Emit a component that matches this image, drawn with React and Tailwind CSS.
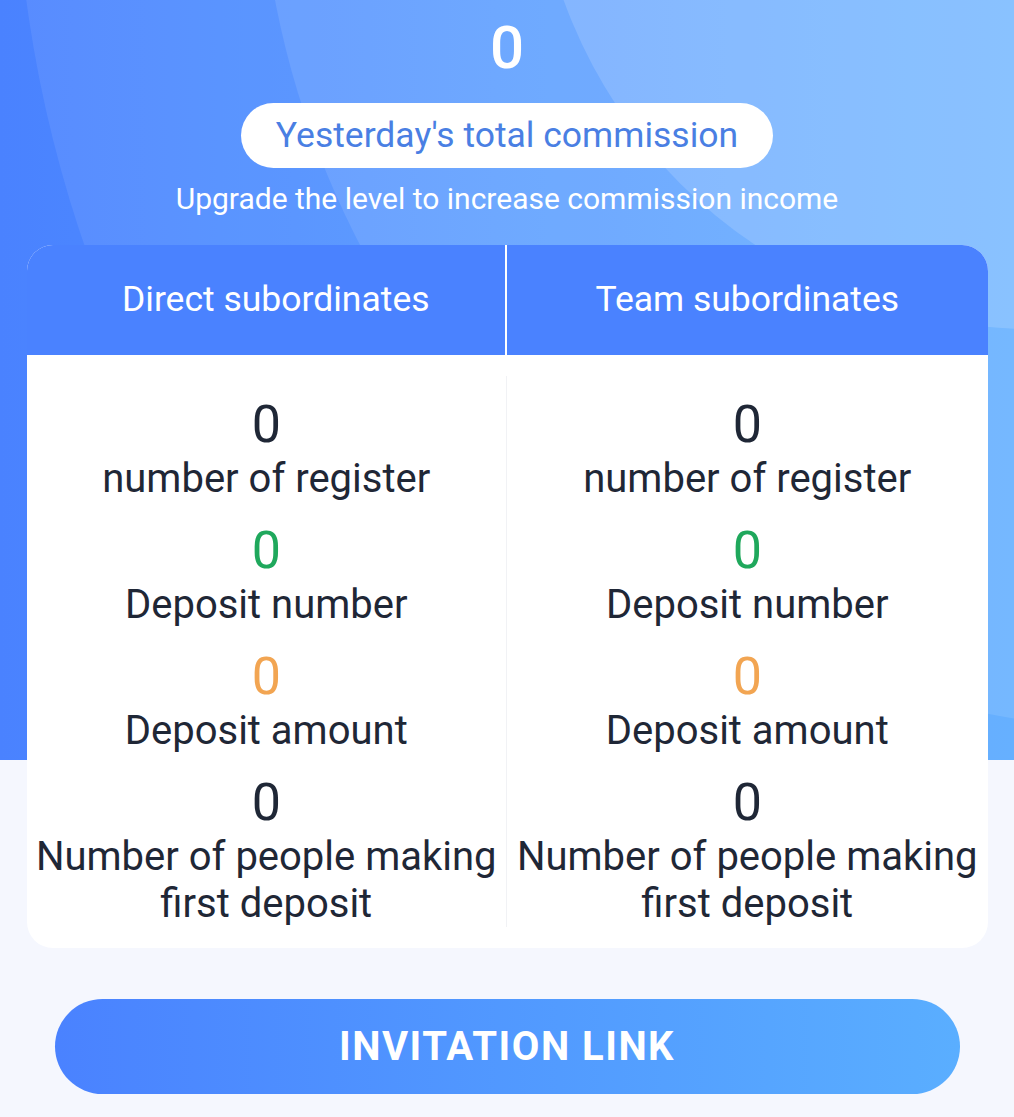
import React from 'react';

const stats = [
  { label: 'number of register', color: 'text-[#1f2736]' },
  { label: 'Deposit number', color: 'text-[#1fa85c]' },
  { label: 'Deposit amount', color: 'text-[#f2a552]' },
  { label: 'Number of people making first deposit', color: 'text-[#1f2736]' },
];

const StatColumn = ({ bordered }) => (
  <div className={`flex flex-col items-center ${bordered ? 'border-r border-[#f1f2f5]' : ''}`}>
    {stats.map((s) => (
      <div key={s.label} className="mt-[18px] flex flex-col items-center text-center">
        <div className={`text-[52px] leading-[61px] ${s.color}`}>0</div>
        <div className="text-[40px] leading-[47px] text-[#1f2736]">{s.label}</div>
      </div>
    ))}
  </div>
);

export default function App() {
  return (
    <div
      className="relative min-h-[1117px] overflow-hidden bg-[#f5f7fe]"
      style={{ fontFamily: 'Roboto, "Noto Sans", sans-serif' }}
    >
      {/* header backdrop */}
      <div className="absolute inset-x-0 top-0 h-[760px] overflow-hidden bg-gradient-to-r from-[#4a82ff] to-[#5aaaff]">
        <div className="absolute left-[15px] top-[-1441px] h-[2544px] w-[2544px] rounded-full bg-white/[0.08]" />
        <div className="absolute left-[259px] top-[-1068px] h-[1798px] w-[1798px] rounded-full bg-white/[0.10]" />
        <div className="absolute left-[534px] top-[-667px] h-[996px] w-[996px] rounded-full bg-white/[0.15]" />
      </div>

      <div className="relative flex flex-col items-center pt-[13px]">
        <div className="text-[60px] font-medium leading-[70px] text-white">0</div>

        <div className="mt-[20px] flex h-[65px] w-[532px] items-center justify-center rounded-full bg-white">
          <span className="text-[35.5px] text-[#4a7fe3]">Yesterday's total commission</span>
        </div>

        <div className="mt-[11px] text-[30px] leading-[40px] text-white">
          Upgrade the level to increase commission income
        </div>

        <div className="mt-[26px] w-[961px] overflow-hidden rounded-[26px] bg-white">
          <div className="grid h-[110px] grid-cols-2 bg-[#4a82ff] text-[35.5px] text-white">
            <div className="flex items-center justify-center border-r-2 border-white pl-[20px]">Direct subordinates</div>
            <div className="flex items-center justify-center">Team subordinates</div>
          </div>
          <div className="grid grid-cols-2 pb-[21px] pt-[21px]">
            <StatColumn bordered />
            <StatColumn />
          </div>
        </div>

        <button className="mt-[51px] flex h-[95px] w-[905px] items-center justify-center rounded-full bg-gradient-to-r from-[#4a82ff] to-[#5aaeff] text-[40px] font-bold tracking-[1.5px] text-white">
          INVITATION LINK
        </button>
      </div>
    </div>
  );
}
